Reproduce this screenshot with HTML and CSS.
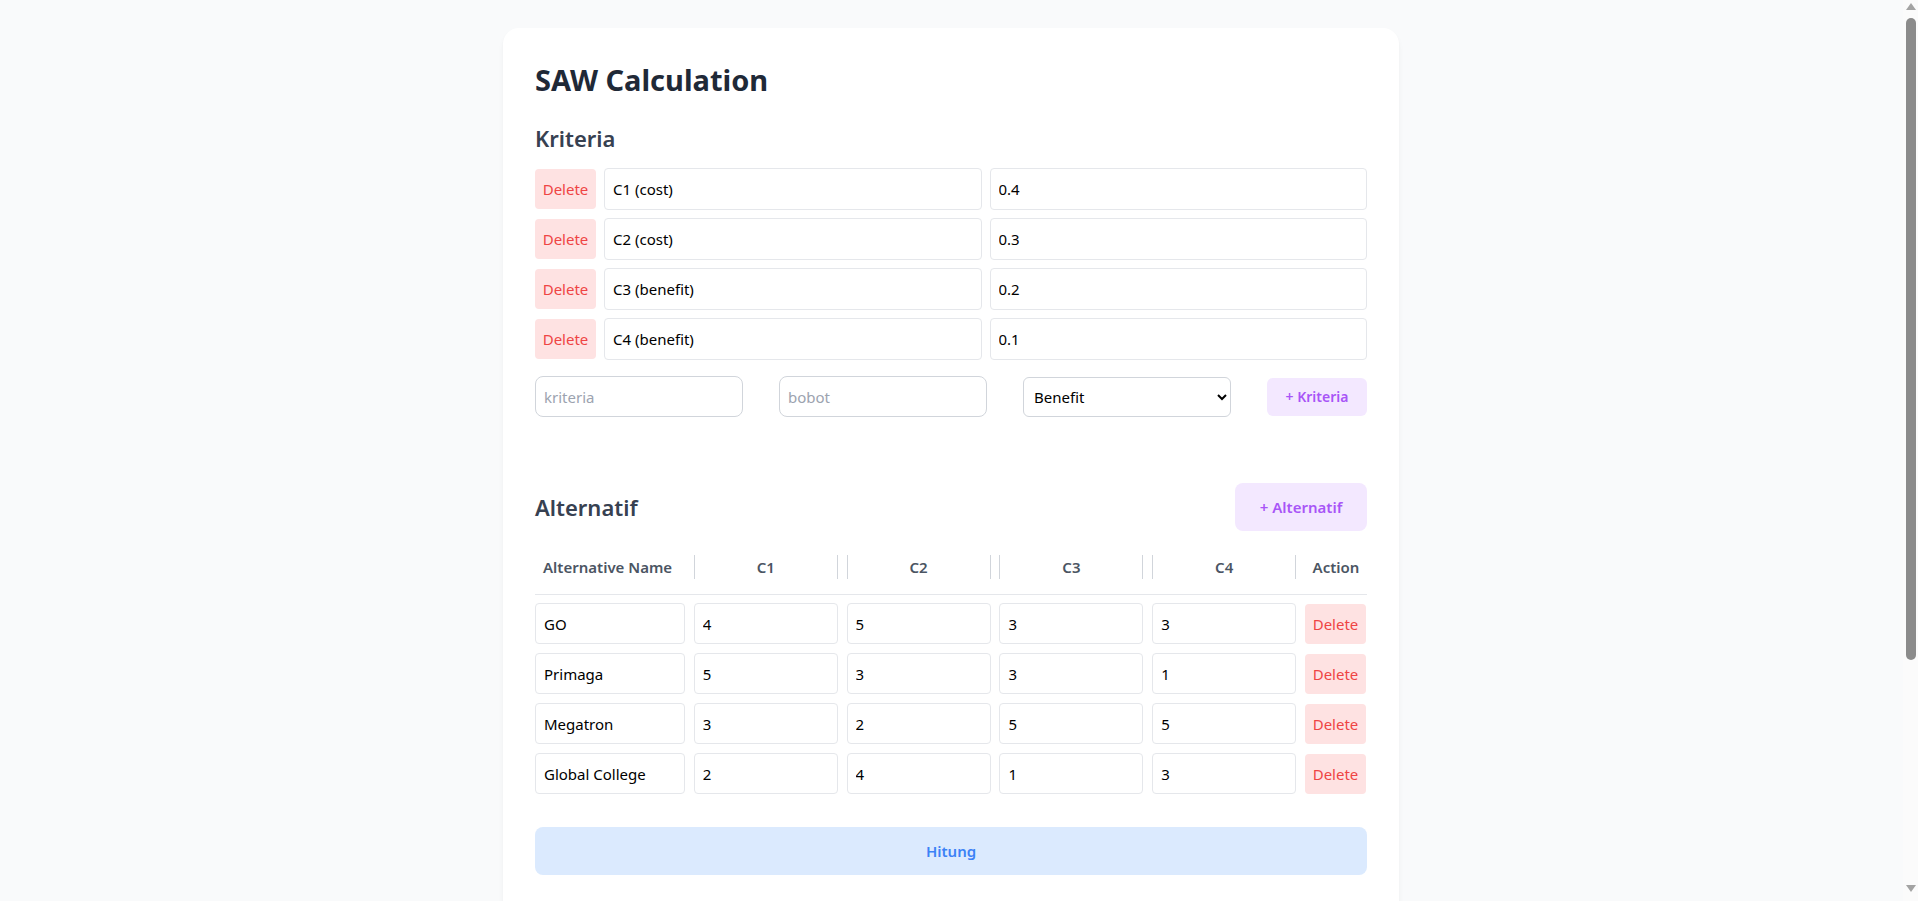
FILE: index.html
```html
<!DOCTYPE html>
<html lang="id">
<head>
<meta charset="utf-8">
<title>SAW Calculation</title>
<link rel="stylesheet" href="styles.css">
</head>
<body>
<div class="page">
  <main class="card">
    <h1 class="title">SAW Calculation</h1>

    <section class="kriteria">
      <h2 class="subtitle">Kriteria</h2>
      <div class="crit-list">
        <div class="crit-row">
          <button class="btn-delete">Delete</button>
          <input class="field" type="text" value="C1 (cost)">
          <input class="field" type="text" value="0.4">
        </div>
        <div class="crit-row">
          <button class="btn-delete">Delete</button>
          <input class="field" type="text" value="C2 (cost)">
          <input class="field" type="text" value="0.3">
        </div>
        <div class="crit-row">
          <button class="btn-delete">Delete</button>
          <input class="field" type="text" value="C3 (benefit)">
          <input class="field" type="text" value="0.2">
        </div>
        <div class="crit-row">
          <button class="btn-delete">Delete</button>
          <input class="field" type="text" value="C4 (benefit)">
          <input class="field" type="text" value="0.1">
        </div>
      </div>
      <div class="new-row">
        <input class="new-field" type="text" placeholder="kriteria">
        <input class="new-field" type="text" placeholder="bobot">
        <select class="new-select">
          <option>Benefit</option>
          <option>Cost</option>
        </select>
        <button class="btn-purple btn-sm">+ Kriteria</button>
      </div>
    </section>

    <section class="alternatif">
      <div class="alt-head">
        <h2 class="subtitle">Alternatif</h2>
        <button class="btn-purple btn-lg">+ Alternatif</button>
      </div>

      <div class="grid grid-head">
        <div class="th th-left">Alternative Name</div>
        <div class="th th-crit">C1</div>
        <div class="th th-crit">C2</div>
        <div class="th th-crit">C3</div>
        <div class="th th-crit">C4</div>
        <div class="th">Action</div>
      </div>

      <div class="alt-list">
        <div class="grid">
          <input class="field" type="text" value="GO">
          <input class="field" type="text" value="4">
          <input class="field" type="text" value="5">
          <input class="field" type="text" value="3">
          <input class="field" type="text" value="3">
          <button class="btn-delete">Delete</button>
        </div>
        <div class="grid">
          <input class="field" type="text" value="Primaga">
          <input class="field" type="text" value="5">
          <input class="field" type="text" value="3">
          <input class="field" type="text" value="3">
          <input class="field" type="text" value="1">
          <button class="btn-delete">Delete</button>
        </div>
        <div class="grid">
          <input class="field" type="text" value="Megatron">
          <input class="field" type="text" value="3">
          <input class="field" type="text" value="2">
          <input class="field" type="text" value="5">
          <input class="field" type="text" value="5">
          <button class="btn-delete">Delete</button>
        </div>
        <div class="grid">
          <input class="field" type="text" value="Global College">
          <input class="field" type="text" value="2">
          <input class="field" type="text" value="4">
          <input class="field" type="text" value="1">
          <input class="field" type="text" value="3">
          <button class="btn-delete">Delete</button>
        </div>
      </div>

      <button class="btn-hitung">Hitung</button>
    </section>
  </main>
</div>

<div class="scrollbar" aria-hidden="true">
  <span class="sb-arrow sb-up"></span>
  <span class="sb-thumb"></span>
  <span class="sb-arrow sb-down"></span>
</div>
</body>
</html>
```

FILE: styles.css
```css
* {
  box-sizing: border-box;
}

html, body {
  margin: 0;
  padding: 0;
}

body {
  background: #f9fafb;
  font-family: "Noto Sans", "Open Sans", sans-serif;
  font-size: 16px;
  line-height: 24px;
  color: #000;
}

.page {
  padding: 28px 16px 28px 0;
}

.card {
  width: 896px;
  margin: 0 auto;
  background: #ffffff;
  border-radius: 16px;
  box-shadow: 0 4px 6px -1px rgba(0, 0, 0, 0.06), 0 2px 4px -2px rgba(0, 0, 0, 0.05);
  padding: 34px 32px 32px;
  min-height: 1166px;
}

.title {
  margin: 0 0 24px;
  font-size: 29px;
  line-height: 36px;
  font-weight: 700;
  color: #1f2937;
}

.subtitle {
  margin: 0;
  font-size: 22px;
  line-height: 32px;
  font-weight: 600;
  color: #374151;
}

.kriteria .subtitle {
  margin-bottom: 14px;
}

.crit-list {
  display: flex;
  flex-direction: column;
  gap: 8px;
}

.crit-row {
  display: flex;
  gap: 8px;
  align-items: center;
}

.crit-row .field {
  flex: 1;
  min-width: 0;
}

.field {
  font-family: inherit;
  font-size: 15px;
  line-height: 24px;
  height: 42px;
  padding: 8px;
  border: 1px solid #e5e7eb;
  border-radius: 4px;
  background: #fff;
  color: #000;
  outline: none;
}

.btn-delete {
  font-family: inherit;
  font-size: 15px;
  line-height: 24px;
  width: 61px;
  height: 40px;
  padding: 0;
  border: none;
  border-radius: 4px;
  background: #fee2e2;
  color: #ef4444;
  cursor: pointer;
  flex: none;
}

.new-row {
  margin-top: 16px;
  display: flex;
  justify-content: space-between;
  align-items: center;
}

.new-field {
  width: 208px;
  height: 41px;
  font-family: inherit;
  font-size: 15px;
  padding: 8px;
  border: 1px solid #d1d5db;
  border-radius: 8px;
  background: #fff;
  outline: none;
}

.new-field::placeholder {
  color: #9ca3af;
}

.new-select {
  width: 208px;
  height: 40px;
  font-family: inherit;
  font-size: 15px;
  padding: 0 6px;
  border: 1px solid #d1d5db;
  border-radius: 6px;
  background: #fff;
  color: #000;
}

.btn-purple {
  font-family: inherit;
  border: none;
  background: #f3e8ff;
  color: #a855f7;
  font-weight: 600;
  cursor: pointer;
}

.btn-sm {
  font-size: 14px;
  height: 38px;
  width: 100px;
  border-radius: 6px;
  padding: 0;
}

.btn-lg {
  font-size: 15px;
  height: 48px;
  width: 132px;
  border-radius: 8px;
  padding: 0;
}

.alternatif {
  margin-top: 66px;
}

.alt-head {
  display: flex;
  justify-content: space-between;
  align-items: center;
}

.grid {
  display: grid;
  grid-template-columns: 150px repeat(4, 1fr) 62px;
  column-gap: 8.8px;
  align-items: center;
}

.grid-head {
  margin-top: 24px;
  padding-bottom: 15px;
  border-bottom: 1px solid #e5e7eb;
}

.th {
  font-size: 15px;
  line-height: 24px;
  font-weight: 600;
  color: #4b5563;
  text-align: center;
  white-space: nowrap;
}

.th-left {
  text-align: left;
  padding-left: 8px;
}

.th-crit {
  border-left: 1px solid #d1d5db;
  border-right: 1px solid #d1d5db;
}

.alt-list {
  margin-top: 8px;
  display: flex;
  flex-direction: column;
  gap: 9px;
}

.alt-list .field {
  width: 100%;
  min-width: 0;
  height: 41px;
}

.btn-hitung {
  margin-top: 33px;
  width: 100%;
  height: 48px;
  font-family: inherit;
  font-size: 15px;
  font-weight: 600;
  border: none;
  border-radius: 8px;
  background: #dbeafe;
  color: #3b82f6;
  cursor: pointer;
}

/* Classic browser scrollbar drawn over the page edge */
.scrollbar {
  position: fixed;
  top: 0;
  right: 0;
  width: 15px;
  height: 100vh;
  background: #fbfbfb;
  display: flex;
  flex-direction: column;
  align-items: center;
}

.sb-thumb {
  margin-top: 8px;
  width: 10px;
  height: 642px;
  border-radius: 5px;
  background: #8b8b8b;
  margin-left: 1px;
}

.sb-arrow {
  width: 0;
  height: 0;
  border-left: 5px solid transparent;
  border-right: 5px solid transparent;
  margin-left: 1px;
}

.sb-up {
  margin-top: 3px;
  border-bottom: 7px solid #a3a3a3;
}

.sb-down {
  margin-top: auto;
  margin-bottom: 9px;
  border-top: 7px solid #a3a3a3;
}
```
